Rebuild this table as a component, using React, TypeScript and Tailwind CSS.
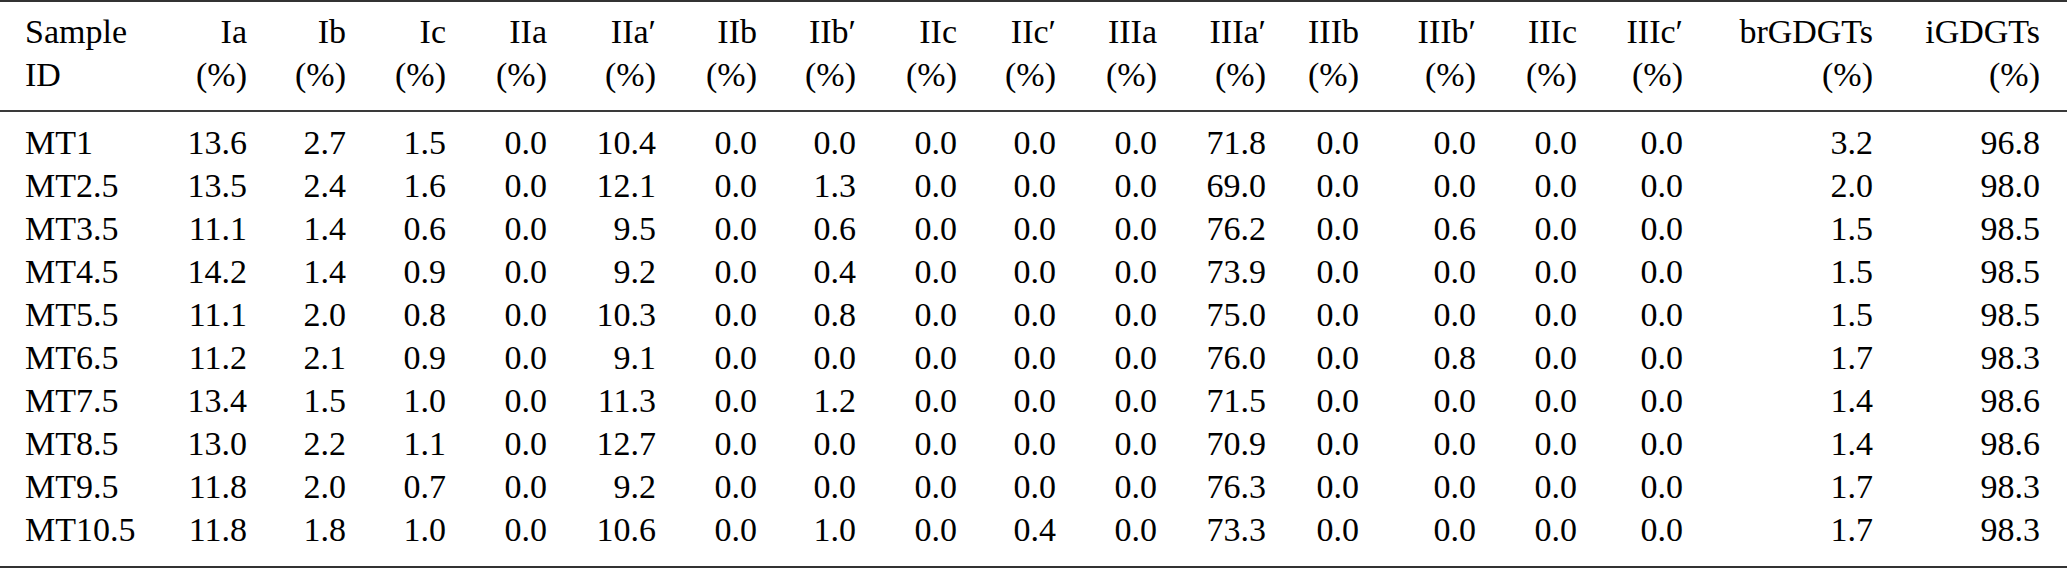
const columns = [
  { top: "Sample", bottom: "ID" },
  { top: "Ia", bottom: "(%)" },
  { top: "Ib", bottom: "(%)" },
  { top: "Ic", bottom: "(%)" },
  { top: "IIa", bottom: "(%)" },
  { top: "IIa′", bottom: "(%)" },
  { top: "IIb", bottom: "(%)" },
  { top: "IIb′", bottom: "(%)" },
  { top: "IIc", bottom: "(%)" },
  { top: "IIc′", bottom: "(%)" },
  { top: "IIIa", bottom: "(%)" },
  { top: "IIIa′", bottom: "(%)" },
  { top: "IIIb", bottom: "(%)" },
  { top: "IIIb′", bottom: "(%)" },
  { top: "IIIc", bottom: "(%)" },
  { top: "IIIc′", bottom: "(%)" },
  { top: "brGDGTs", bottom: "(%)" },
  { top: "iGDGTs", bottom: "(%)" },
];

const rows = [
  ["MT1", "13.6", "2.7", "1.5", "0.0", "10.4", "0.0", "0.0", "0.0", "0.0", "0.0", "71.8", "0.0", "0.0", "0.0", "0.0", "3.2", "96.8"],
  ["MT2.5", "13.5", "2.4", "1.6", "0.0", "12.1", "0.0", "1.3", "0.0", "0.0", "0.0", "69.0", "0.0", "0.0", "0.0", "0.0", "2.0", "98.0"],
  ["MT3.5", "11.1", "1.4", "0.6", "0.0", "9.5", "0.0", "0.6", "0.0", "0.0", "0.0", "76.2", "0.0", "0.6", "0.0", "0.0", "1.5", "98.5"],
  ["MT4.5", "14.2", "1.4", "0.9", "0.0", "9.2", "0.0", "0.4", "0.0", "0.0", "0.0", "73.9", "0.0", "0.0", "0.0", "0.0", "1.5", "98.5"],
  ["MT5.5", "11.1", "2.0", "0.8", "0.0", "10.3", "0.0", "0.8", "0.0", "0.0", "0.0", "75.0", "0.0", "0.0", "0.0", "0.0", "1.5", "98.5"],
  ["MT6.5", "11.2", "2.1", "0.9", "0.0", "9.1", "0.0", "0.0", "0.0", "0.0", "0.0", "76.0", "0.0", "0.8", "0.0", "0.0", "1.7", "98.3"],
  ["MT7.5", "13.4", "1.5", "1.0", "0.0", "11.3", "0.0", "1.2", "0.0", "0.0", "0.0", "71.5", "0.0", "0.0", "0.0", "0.0", "1.4", "98.6"],
  ["MT8.5", "13.0", "2.2", "1.1", "0.0", "12.7", "0.0", "0.0", "0.0", "0.0", "0.0", "70.9", "0.0", "0.0", "0.0", "0.0", "1.4", "98.6"],
  ["MT9.5", "11.8", "2.0", "0.7", "0.0", "9.2", "0.0", "0.0", "0.0", "0.0", "0.0", "76.3", "0.0", "0.0", "0.0", "0.0", "1.7", "98.3"],
  ["MT10.5", "11.8", "1.8", "1.0", "0.0", "10.6", "0.0", "1.0", "0.0", "0.4", "0.0", "73.3", "0.0", "0.0", "0.0", "0.0", "1.7", "98.3"],
];

// column widths measured off the reference (right edges of each column)
const gridCols =
  "grid grid-cols-[140px_82px_99px_100px_101px_109px_101px_99px_101px_99px_101px_109px_93px_117px_101px_106px_190px_167px]";

function Cell({ text, left }: { text: string; left?: boolean }) {
  return <div className={left ? "text-left whitespace-nowrap" : "text-right whitespace-nowrap"}>{text}</div>;
}

export default function App() {
  return (
    <div className="[font-family:'Liberation_Serif',serif] w-[2067px] h-[568px] bg-white text-black text-[34px] leading-[43px] overflow-hidden">
      <div className="h-[2px] bg-[#333333]" />

      <div className="pl-[25px] pr-[27px] pt-[8px] pb-[14px]">
        <div className={gridCols}>
          {columns.map((c, i) => (
            <Cell key={"t" + i} text={c.top} left={i === 0} />
          ))}
          {columns.map((c, i) => (
            <Cell key={"b" + i} text={c.bottom} left={i === 0} />
          ))}
        </div>
      </div>

      <div className="h-[2px] bg-[#3a3a3a]" />

      <div className="pl-[25px] pr-[27px] pt-[9px] pb-[15px]">
        <div className={gridCols}>
          {rows.map((row, r) =>
            row.map((v, i) => <Cell key={r + "-" + i} text={v} left={i === 0} />)
          )}
        </div>
      </div>

      <div className="h-[2px] bg-[#333333]" />
    </div>
  );
}
